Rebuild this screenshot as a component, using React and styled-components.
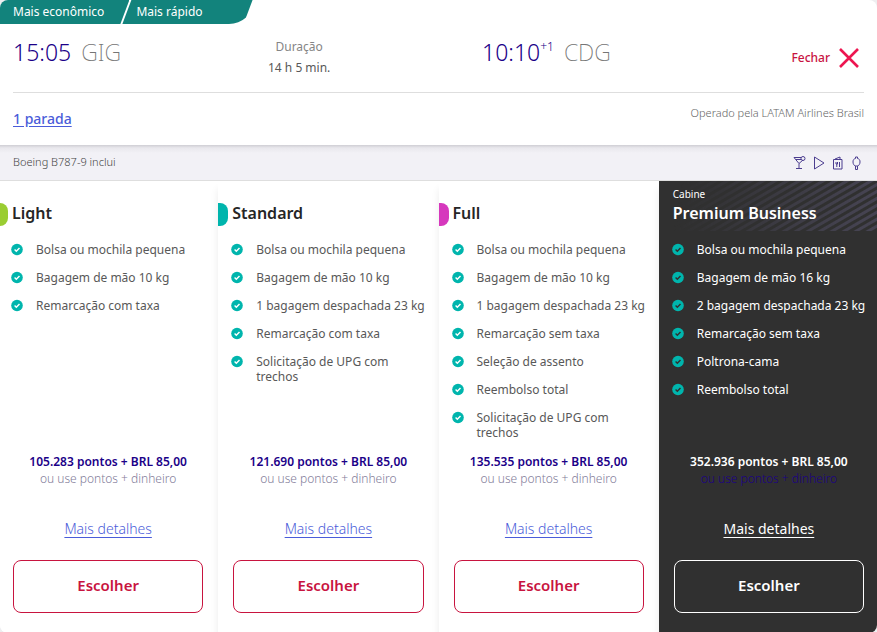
import React from 'react'
import styled, { createGlobalStyle, css } from 'styled-components'

const colors = {
  indigo: '#1b0088',
  teal: '#12837c',
  turquoise: '#00b5ad',
  crimson: '#c8143f',
  coral: '#ed1650',
  link: '#4a5cd9',
  dark: '#303030',
  text: '#585858',
  muted: '#858585'
}

const GlobalStyle = createGlobalStyle`
  * {
    box-sizing: border-box;
  }

  body {
    margin: 0;
    background-color: #eeeef0;
    color: ${colors.text};
    font-family: 'Noto Sans', 'Open Sans', sans-serif;
    font-size: 12px;
    line-height: 15px;
  }
`

const Card = styled.article`
  background-color: white;
  border-radius: 8px;
  overflow: hidden;
`

const Tags = styled.div`
  display: flex;
  height: 24px;
`

const Tag = styled.span`
  background-color: ${colors.teal};
  color: white;
  font-size: 12px;
  line-height: 24px;
  ${props =>
    props.$last
      ? css`
          margin-left: -7px;
          padding: 0 50px 0 14px;
          border-bottom-right-radius: 24px 22px;
          clip-path: polygon(9px 0, 100% 0, calc(100% - 9px) 100%, 0 100%);
        `
      : css`
          padding: 0 25px 0 13px;
          clip-path: polygon(0 0, 100% 0, calc(100% - 9px) 100%, 0 100%);
        `};
`

const Summary = styled.header`
  display: grid;
  grid-template-columns: 255px 214px 1fr auto;
  margin: 0 13px;
  height: 69px;
  border-bottom: 1px solid #dedede;
`

const Time = styled.div`
  display: flex;
  padding-top: 12px;
  color: ${colors.indigo};
  font-size: 23px;
  font-weight: 300;
  line-height: 32px;

  sup {
    font-size: 12px;
    line-height: 22px;
  }
`

const Airport = styled.span`
  margin-left: 10px;
  color: #757575;
  font-weight: 200;
`

const Duration = styled.div`
  justify-self: start;
  padding-top: 12px;
  font-size: 12px;
  line-height: 21px;
  text-align: center;

  span {
    display: block;
    color: ${colors.muted};
  }
`

const CloseButton = styled.button`
  display: flex;
  align-items: center;
  align-self: start;
  gap: 9px;
  margin: 23px 5px 0 0;
  padding: 0;
  border: 0;
  background: none;
  color: ${colors.crimson};
  font: 500 12px/22px 'Noto Sans', sans-serif;
  cursor: pointer;
`

const Stops = styled.div`
  display: flex;
  justify-content: space-between;
  height: 52px;
  padding: 12px 13px 0;
`

const StopLink = styled.a`
  color: ${colors.link};
  font-size: 14px;
  font-weight: 500;
  line-height: 28px;
  text-underline-offset: 2px;
`

const Operator = styled.span`
  color: #666;
  font-size: 11px;
  font-weight: 300;
  line-height: 16px;
`

const Plane = styled.div`
  display: flex;
  justify-content: space-between;
  align-items: center;
  height: 36px;
  padding: 0 13px 3px;
  border-bottom: 1px solid #dedede;
  background: linear-gradient(#cfced4, #e9e8ed 3px, #f2f1f6 8px);
  color: #444;
  font-size: 11px;
  font-weight: 300;
`

const Amenities = styled.div`
  display: flex;
  gap: 5px;
  padding-top: 3px;

  svg {
    fill: none;
    stroke: #4b3d8f;
  }
`

const Fares = styled.div`
  display: grid;
  grid-template-columns: repeat(4, 1fr);
  margin: 0 -2px;
`

const Fare = styled.section`
  display: flex;
  flex-direction: column;
  padding: 6px 15px 20px;
  background-color: white;
  box-shadow: 0 8px 8px rgba(0, 0, 0, 0.08);

  ${props =>
    props.$premium &&
    css`
      background-color: ${colors.dark};
      color: white;
    `};
`

const FareHead = styled.div`
  position: relative;
  height: 44px;
  margin: -6px -15px 0;
  padding: 6px 14px 0;

  ${props =>
    props.$premium
      ? css`
          &::before {
            content: '';
            position: absolute;
            top: 0;
            right: 0;
            left: 0;
            height: 50px;
            background: repeating-linear-gradient(
              150deg,
              transparent 0 2px,
              #454351 3px 5px,
              transparent 6px
            );
            mask-image: linear-gradient(100deg, transparent 10%, black 90%);
          }
        `
      : css`
          &::before {
            content: '';
            position: absolute;
            top: 22px;
            left: 0;
            width: 10px;
            height: 23px;
            border-radius: 0 8px 8px 0;
            background-color: ${props.$accent};
          }
        `};
`

const Cabin = styled.div`
  position: relative;
  height: 15px;
  font-size: 10px;
`

const FareName = styled.h2`
  position: relative;
  margin: 0;
  color: ${props => (props.$premium ? 'white' : '#262626')};
  font-size: 16px;
  font-weight: 600;
  line-height: 22px;
`

const Benefits = styled.ul`
  display: flex;
  flex: 1;
  flex-direction: column;
  gap: 13px;
  margin: 0;
  padding: 17px 0 13px;
  list-style: none;
`

const Benefit = styled.li`
  display: flex;
  gap: 13px;
  margin: 0 -10px 0 -2px;

  svg {
    flex: none;
  }
`

const Price = styled.div`
  color: ${props => (props.$premium ? 'white' : colors.indigo)};
  font-size: 12px;
  font-weight: 600;
  line-height: 17px;
  text-align: center;

  span {
    display: block;
    color: ${props => (props.$premium ? colors.indigo : '#827c99')};
    font-weight: 300;
  }
`

const DetailsLink = styled.a`
  align-self: center;
  margin: 32px 0 21px;
  color: ${props => (props.$premium ? 'white' : colors.link)};
  font-size: 14px;
  font-weight: ${props => (props.$premium ? 400 : 300)};
  line-height: 20px;
  text-underline-offset: 3px;
`

const ChooseButton = styled.button`
  height: 53px;
  padding: 0 0 4px;
  border: 1px solid ${props => (props.$premium ? 'white' : colors.crimson)};
  border-radius: 8px;
  background: none;
  color: ${props => (props.$premium ? 'white' : colors.crimson)};
  font: 600 15px/20px 'Noto Sans', sans-serif;
  cursor: pointer;
`

const fares = [
  {
    name: 'Light',
    accent: '#9acd32',
    points: '105.283',
    benefits: [
      'Bolsa ou mochila pequena',
      'Bagagem de mão 10 kg',
      'Remarcação com taxa'
    ]
  },
  {
    name: 'Standard',
    accent: '#00b5ad',
    points: '121.690',
    benefits: [
      'Bolsa ou mochila pequena',
      'Bagagem de mão 10 kg',
      '1 bagagem despachada 23 kg',
      'Remarcação com taxa',
      'Solicitação de UPG com trechos'
    ]
  },
  {
    name: 'Full',
    accent: '#d638bd',
    points: '135.535',
    benefits: [
      'Bolsa ou mochila pequena',
      'Bagagem de mão 10 kg',
      '1 bagagem despachada 23 kg',
      'Remarcação sem taxa',
      'Seleção de assento',
      'Reembolso total',
      'Solicitação de UPG com trechos'
    ]
  },
  {
    name: 'Premium Business',
    cabin: 'Cabine',
    premium: true,
    points: '352.936',
    benefits: [
      'Bolsa ou mochila pequena',
      'Bagagem de mão 16 kg',
      '2 bagagem despachada 23 kg',
      'Remarcação sem taxa',
      'Poltrona-cama',
      'Reembolso total'
    ]
  }
]

const CheckIcon = ({ premium }) => (
  <svg width="12" height="15" viewBox="0 0 12 15" aria-hidden="true">
    <circle cx="6" cy="7.5" r="5.8" fill={colors.turquoise} />
    <path
      d="M3.6 7.6l1.7 1.7 3.2-3.4"
      fill="none"
      stroke={premium ? colors.dark : 'white'}
      strokeWidth="1.4"
    />
  </svg>
)

const CloseIcon = () => (
  <svg width="20" height="20" viewBox="0 0 20 20" aria-hidden="true">
    <path d="M1 1l18 18M19 1L1 19" stroke={colors.coral} strokeWidth="2.6" />
  </svg>
)

const AmenityIcons = () => (
  <Amenities>
    <svg width="14" height="14" viewBox="0 0 14 14" aria-hidden="true">
      <path d="M8 1.5H1L6 7.5l4-3.500M6 7.500v5M3 12.500h6M3 3.500h5" />
      <circle cx="10" cy="2.500" r="2" />
    </svg>
    <svg width="14" height="14" viewBox="0 0 14 14" aria-hidden="true">
      <path d="M2.500 1v12L12 7z" />
    </svg>
    <svg width="14" height="14" viewBox="0 0 14 14" aria-hidden="true">
      <path d="M2.500 3.500h8.500v9.500H2.500zM4 3l5-2v2.500M5 6v2h1.500V6M5.800 8v3M8.500 11V6" />
    </svg>
    <svg width="14" height="14" viewBox="0 0 14 14" aria-hidden="true">
      <path d="M5.500 1h2v1.500c2 .5 2.500 1.500 2.500 3.500s-1 3-2 4H5C4 9 3 8 3 6s.500-3 2.500-3.500zM5.500 10v3.500h2V10" />
    </svg>
  </Amenities>
)

const FareColumn = ({ fare }) => {
  const { name, cabin, premium, accent, points, benefits } = fare

  return (
    <Fare $premium={premium}>
      <FareHead $premium={premium} $accent={accent}>
        <Cabin>{cabin}</Cabin>
        <FareName $premium={premium}>{name}</FareName>
      </FareHead>
      <Benefits>
        {benefits.map(benefit => (
          <Benefit key={benefit}>
            <CheckIcon premium={premium} />
            {benefit}
          </Benefit>
        ))}
      </Benefits>
      <Price $premium={premium}>
        {points} pontos + BRL 85,00
        <span>ou use pontos + dinheiro</span>
      </Price>
      <DetailsLink href="#detalhes" $premium={premium}>
        Mais detalhes
      </DetailsLink>
      <ChooseButton type="button" $premium={premium}>
        Escolher
      </ChooseButton>
    </Fare>
  )
}

const App = () => (
  <>
    <GlobalStyle />
    <Card>
      <Tags>
        <Tag>Mais econômico</Tag>
        <Tag $last>Mais rápido</Tag>
      </Tags>
      <Summary>
        <Time>
          15:05<Airport>GIG</Airport>
        </Time>
        <Duration>
          <span>Duração</span>
          14 h 5 min.
        </Duration>
        <Time>
          10:10<sup>+1</sup>
          <Airport>CDG</Airport>
        </Time>
        <CloseButton type="button">
          Fechar
          <CloseIcon />
        </CloseButton>
      </Summary>
      <Stops>
        <StopLink href="#paradas">1 parada</StopLink>
        <Operator>Operado pela LATAM Airlines Brasil</Operator>
      </Stops>
      <Plane>
        Boeing B787-9 inclui
        <AmenityIcons />
      </Plane>
      <Fares>
        {fares.map(fare => (
          <FareColumn key={fare.name} fare={fare} />
        ))}
      </Fares>
    </Card>
  </>
)

export default App
